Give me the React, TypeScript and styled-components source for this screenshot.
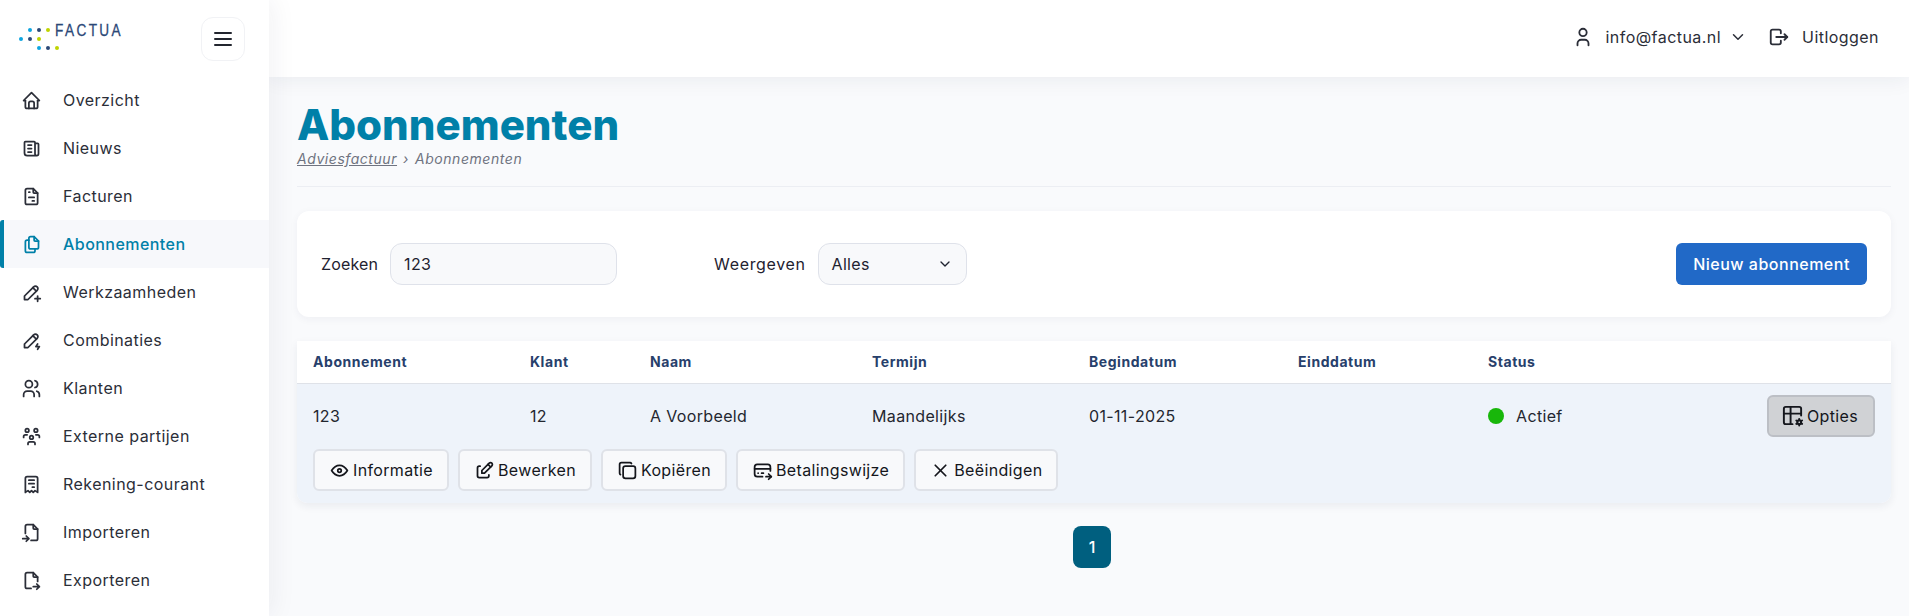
import { createGlobalStyle } from "styled-components";
import styled from "styled-components";
import {
  TbHome,
  TbNews,
  TbFileInvoice,
  TbFiles,
  TbPencilPlus,
  TbPencilBolt,
  TbUsers,
  TbUsersGroup,
  TbReceipt,
  TbFileImport,
  TbFileExport,
  TbUser,
  TbChevronDown,
  TbLogout,
  TbMenu2,
  TbEye,
  TbEdit,
  TbCopy,
  TbCreditCardPay,
  TbX,
  TbTableOptions,
} from "react-icons/tb";

const GlobalStyle = createGlobalStyle`
  html, body {
    margin: 0;
    padding: 0;
    background: #f9fafc;
    font-family: "Inter", "Noto Sans", sans-serif;
    color: #23262f;
  }
  * { box-sizing: border-box; }
`;

const Shell = styled.div`
  display: flex;
  width: 1909px;
  height: 616px;
  overflow: hidden;
`;

const Sidebar = styled.aside`
  width: 269px;
  flex: none;
  background: #fff;
  box-shadow: 4px 0 24px rgba(30, 40, 70, 0.06);
  z-index: 2;
`;

const SidebarHead = styled.div`
  height: 76px;
  display: flex;
  justify-content: space-between;
  padding: 17px 24px 0 18px;
`;

const Logo = styled.div`
  display: flex;
  align-items: flex-start;
`;

const LogoName = styled.span`
  font-family: "Liberation Sans", sans-serif;
  font-size: 17px;
  line-height: 18px;
  letter-spacing: 3px;
  color: #2b4877;
  margin: 5px 0 0 -5px;
  transform: scaleX(0.8);
  transform-origin: left center;
  -webkit-text-stroke: 0.3px #2b4877;
`;

const MenuButton = styled.button`
  width: 44px;
  height: 44px;
  border: 1px solid #f1f2f5;
  border-radius: 12px;
  background: #fff;
  display: flex;
  align-items: center;
  justify-content: center;
  color: #23262f;
  padding: 0;
`;

const Nav = styled.nav`
  display: flex;
  flex-direction: column;
`;

const NavItem = styled.a<{ $active?: boolean }>`
  height: 48px;
  display: flex;
  align-items: center;
  gap: 21px;
  padding-left: 17px;
  font-size: 16px;
  letter-spacing: 0.45px;
  color: ${(p) => (p.$active ? "#0080a8" : "#2b2e38")};
  font-weight: ${(p) => (p.$active ? 500 : 400)};
  background: ${(p) => (p.$active ? "#f7f8fb" : "transparent")};
  border-left: 4px solid ${(p) => (p.$active ? "#0080a8" : "transparent")};
  border-radius: ${(p) => (p.$active ? "3px 0 0 3px" : "0")};
  svg { flex: none; }
`;

const Main = styled.div`
  flex: 1;
  min-width: 0;
  display: flex;
  flex-direction: column;
`;

const Topbar = styled.header`
  height: 77px;
  flex: none;
  background: #fff;
  box-shadow: 0 2px 20px rgba(30, 40, 70, 0.07);
  display: flex;
  align-items: center;
  justify-content: flex-end;
  gap: 21px;
  padding: 0 30px 4px 0;
  font-size: 16px;
  letter-spacing: 0.45px;
  z-index: 1;
`;

const TopLink = styled.div`
  display: flex;
  align-items: center;
  color: #2b2e38;
`;

const TopIcon = styled.span`
  display: flex;
  margin-right: 12px;
`;

const Chevron = styled.span`
  display: flex;
  margin-left: 8px;
`;

const Content = styled.main`
  padding: 0 18px 0 28px;
`;

const PageHead = styled.div`
  height: 110px;
  border-bottom: 1px solid #eceef3;
  padding-top: 24px;
`;

const Title = styled.h1`
  margin: 0;
  font-size: 42px;
  line-height: 48px;
  font-weight: 800;
  color: #0080a8;
  letter-spacing: 0;
`;

const Crumbs = styled.div`
  font-size: 14px;
  line-height: 18px;
  font-style: italic;
  letter-spacing: 0.55px;
  color: #6f7380;
  display: flex;
  align-items: center;
  gap: 6px;
  margin-top: 1px;
`;

const CrumbLink = styled.a`
  text-decoration: underline;
`;

const FilterCard = styled.section`
  margin-top: 24px;
  height: 106px;
  background: #fff;
  border-radius: 12px;
  box-shadow: 0 2px 8px rgba(30, 40, 70, 0.05);
  display: flex;
  align-items: center;
  padding: 0 24px;
  margin-bottom: 24px;
`;

const Field = styled.div<{ $after: number; $track: number }>`
  display: flex;
  align-items: center;
  gap: 12px;
  font-size: 16px;
  letter-spacing: ${(p) => p.$track}px;
  color: #1f2230;
  margin-right: ${(p) => p.$after}px;
`;

const TextBox = styled.div<{ $width: number }>`
  width: ${(p) => p.$width}px;
  height: 42px;
  border: 1px solid #dfe2ea;
  border-radius: 12px;
  background: #f8f9fb;
  display: flex;
  align-items: center;
  justify-content: space-between;
  padding: 0 13px;
  font-size: 16px;
  letter-spacing: 0.3px;
`;

const PrimaryButton = styled.button`
  margin-left: auto;
  width: 191px;
  height: 42px;
  border: 0;
  border-radius: 6px;
  background: #2169c7;
  color: #fff;
  font: 500 16px "Inter", sans-serif;
  letter-spacing: 0.5px;
`;

const Table = styled.section`
  background: #fff;
  border-radius: 0 0 10px 10px;
  box-shadow: 0 3px 8px rgba(30, 40, 70, 0.07);
`;

const HeadRow = styled.div`
  display: grid;
  grid-template-columns: 217px 120px 222px 217px 209px 190px 1fr;
  height: 43px;
  align-items: center;
  padding: 0 0 1px 16px;
  border-bottom: 1px solid #dfe2e8;
  font-size: 14px;
  font-weight: 700;
  letter-spacing: 0.55px;
  color: #27406b;
`;

const Row = styled.div`
  background: #eef3fa;
  height: 119px;
  border-radius: 0 0 10px 10px;
  padding: 0 16px;
`;

const RowCells = styled.div`
  display: grid;
  grid-template-columns: 217px 120px 222px 217px 209px 190px 1fr;
  height: 63px;
  align-items: center;
  font-size: 16px;
  letter-spacing: 0.35px;
  color: #23262f;
`;

const Status = styled.div`
  display: flex;
  align-items: center;
  gap: 12px;
  margin-right: auto;
`;

const Dot = styled.span`
  width: 16px;
  height: 16px;
  border-radius: 50%;
  background: #18b70a;
`;

const ActionButton = styled.button<{ $open?: boolean }>`
  height: 42px;
  padding: ${(p) => (p.$open ? "0 15px 0 12px" : "0 14px")};
  display: inline-flex;
  align-items: center;
  gap: 3px;
  border: 2px solid ${(p) => (p.$open ? "#bcbfc5" : "#dfe2e8")};
  border-radius: 6px;
  background: ${(p) => (p.$open ? "#d0d2d5" : "#f8f9fb")};
  color: #14161c;
  font: 400 16px "Inter", sans-serif;
  letter-spacing: 0.35px;
`;

const OptionsCell = styled.div`
  display: flex;
  align-items: center;
  justify-content: flex-end;
`;

const Actions = styled.div`
  display: flex;
  gap: 9px;
  margin-top: 2px;
`;

const Pager = styled.div`
  display: flex;
  justify-content: center;
  margin-top: 23px;
  padding-right: 4px;
`;

const PageNumber = styled.span`
  width: 38px;
  height: 42px;
  border-radius: 8px;
  background: #005f7f;
  color: #fff;
  display: flex;
  align-items: center;
  justify-content: center;
  font-size: 16px;
  font-weight: 500;
`;

const menu = [
  { label: "Overzicht", icon: TbHome },
  { label: "Nieuws", icon: TbNews },
  { label: "Facturen", icon: TbFileInvoice },
  { label: "Abonnementen", icon: TbFiles, active: true },
  { label: "Werkzaamheden", icon: TbPencilPlus },
  { label: "Combinaties", icon: TbPencilBolt },
  { label: "Klanten", icon: TbUsers },
  { label: "Externe partijen", icon: TbUsersGroup },
  { label: "Rekening-courant", icon: TbReceipt },
  { label: "Importeren", icon: TbFileImport },
  { label: "Exporteren", icon: TbFileExport },
];

const actions = [
  { label: "Informatie", icon: TbEye },
  { label: "Bewerken", icon: TbEdit },
  { label: "Kopiëren", icon: TbCopy },
  { label: "Betalingswijze", icon: TbCreditCardPay },
  { label: "Beëindigen", icon: TbX },
];

const dots = [
  [12, 13, "#0ea5e0"],
  [21, 13, "#2b4877"],
  [30, 13, "#bfd400"],
  [3, 22, "#0ea5e0"],
  [12, 22, "#2b4877"],
  [21, 22, "#bfd400"],
  [21, 31, "#0ea5e0"],
  [30, 31, "#2b4877"],
  [39, 31, "#bfd400"],
] as const;

export default function App() {
  return (
    <Shell>
      <GlobalStyle />
      <Sidebar>
        <SidebarHead>
          <Logo>
            <svg width="42" height="36" viewBox="0 0 42 36">
              {dots.map(([x, y, fill]) => (
                <circle key={`${x}-${y}`} cx={x} cy={y} r="2" fill={fill} />
              ))}
            </svg>
            <LogoName>FACTUA</LogoName>
          </Logo>
          <MenuButton aria-label="Menu">
            <TbMenu2 size={24} />
          </MenuButton>
        </SidebarHead>
        <Nav>
          {menu.map((item) => (
            <NavItem key={item.label} $active={item.active}>
              <item.icon size={21} />
              {item.label}
            </NavItem>
          ))}
        </Nav>
      </Sidebar>
      <Main>
        <Topbar>
          <TopLink>
            <TopIcon>
              <TbUser size={22} />
            </TopIcon>
            info@factua.nl
            <Chevron>
              <TbChevronDown size={18} />
            </Chevron>
          </TopLink>
          <TopLink>
            <TopIcon>
              <TbLogout size={22} />
            </TopIcon>
            Uitloggen
          </TopLink>
        </Topbar>
        <Content>
          <PageHead>
            <Title>Abonnementen</Title>
            <Crumbs>
              <CrumbLink>Adviesfactuur</CrumbLink> › <span>Abonnementen</span>
            </Crumbs>
          </PageHead>
          <FilterCard>
            <Field $after={97} $track={0.15}>
              Zoeken
              <TextBox $width={227}>123</TextBox>
            </Field>
            <Field $after={0} $track={0.65}>
              Weergeven
              <TextBox $width={149}>
                Alles
                <TbChevronDown size={16} />
              </TextBox>
            </Field>
            <PrimaryButton>Nieuw abonnement</PrimaryButton>
          </FilterCard>
          <Table>
            <HeadRow>
              <span>Abonnement</span>
              <span>Klant</span>
              <span>Naam</span>
              <span>Termijn</span>
              <span>Begindatum</span>
              <span>Einddatum</span>
              <span>Status</span>
            </HeadRow>
            <Row>
              <RowCells>
                <span>123</span>
                <span>12</span>
                <span>A Voorbeeld</span>
                <span>Maandelijks</span>
                <span>01-11-2025</span>
                <span />
                <OptionsCell>
                  <Status>
                    <Dot />
                    Actief
                  </Status>
                  <ActionButton $open>
                    <TbTableOptions size={23} />
                    Opties
                  </ActionButton>
                </OptionsCell>
              </RowCells>
              <Actions>
                {actions.map((a) => (
                  <ActionButton key={a.label}>
                    <a.icon size={21} />
                    {a.label}
                  </ActionButton>
                ))}
              </Actions>
            </Row>
          </Table>
          <Pager>
            <PageNumber>1</PageNumber>
          </Pager>
        </Content>
      </Main>
    </Shell>
  );
}
